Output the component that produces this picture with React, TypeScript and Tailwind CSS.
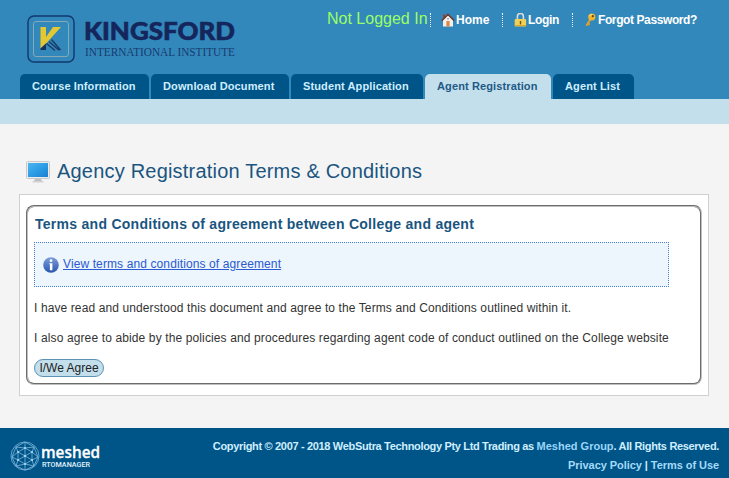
import React from 'react'

const tabs = [
  { label: 'Course Information', width: 'w-[129px]' },
  { label: 'Download Document', width: 'w-[138px]' },
  { label: 'Student Application', width: 'w-[132px]' },
  { label: 'Agent Registration', width: 'w-[126px]', active: true },
  { label: 'Agent List', width: 'w-[81px]' },
]

function KingsfordLogo() {
  return (
    <svg width="212" height="50" viewBox="0 0 212 50" className="block overflow-visible">
      <rect x="1" y="1" width="46" height="46" rx="6" fill="none" stroke="#12366e" strokeWidth="1.4" />
      <rect x="6.5" y="6.5" width="35" height="35" rx="2.5" fill="none" stroke="#86a9b5" strokeWidth="1" />
      <path d="M13.500 12h5.500v10l7-10h8L20 27.500l-6.500 6z" fill="#e3c832" />
      <path d="M13.500 35v-1.500l5.500-5v6.500z" fill="#16305f" />
      <path d="M19.500 28.500l8.500 7M22 26.500l10 8.800M24.500 24.500l9 10.500" stroke="#1b3a68" strokeWidth="1.500" fill="none" />
      <text x="57" y="25" textLength="151" lengthAdjust="spacingAndGlyphs" fontFamily="Lato, sans-serif" fontWeight="900" fontSize="25" fill="#14265c" stroke="#14265c" strokeWidth=".6">KINGSFORD</text>
      <text x="58" y="41" textLength="150" lengthAdjust="spacingAndGlyphs" fontFamily="Liberation Serif, serif" fontSize="12" fill="#173b70">INTERNATIONAL INSTITUTE</text>
    </svg>
  )
}

function HomeIcon() {
  return (
    <svg width="14" height="14" viewBox="0 0 14 14" className="shrink-0">
      <path d="M2 1.5h2v3H2z" fill="#a33c2c" />
      <path d="M2 7l5-5 5 5v6.5H2z" fill="#f3efed" />
      <path d="M.8 7.600L7 1.400l6.200 6.200" fill="none" stroke="#6d3a30" strokeWidth="1.500" />
      <path d="M5.400 8h3.200v5.500H5.400z" fill="#dd8743" />
      <path d="M6.200 5h1.600v1.600H6.200z" fill="#8aa5b8" />
    </svg>
  )
}

function LockIcon() {
  return (
    <svg width="13" height="14" viewBox="0 0 13 14" className="shrink-0">
      <path d="M3.400 7V3.400a3 3 0 0 1 6 0V7" fill="none" stroke="#d7dcdf" strokeWidth="1.600" />
      <rect x=".7" y="6" width="11.400" height="7.600" rx=".8" fill="#f2cf55" />
      <path d="M.7 12h11.400v1H.7z" fill="#d8a72e" />
      <path d="M5.800 8h1.400v3.400H5.800z" fill="#6c5314" />
    </svg>
  )
}

function KeyIcon() {
  return (
    <svg width="11" height="14" viewBox="0 0 11 14" className="shrink-0">
      <path d="M5.600 6L1.400 12.800M3 10.600l1.800 1" stroke="#dfa02c" strokeWidth="2" fill="none" />
      <circle cx="6.800" cy="4" r="3.600" fill="#f3b62b" />
      <path d="M4.300 3.200a2.800 2.800 0 0 1 3-1.600" stroke="#fbe08a" fill="none" />
      <circle cx="7.800" cy="3.200" r="1.100" fill="#5c4516" />
    </svg>
  )
}

function MonitorIcon() {
  return (
    <svg width="24" height="22" viewBox="0 0 24 22" className="block">
      <defs>
        <linearGradient id="screen" x1="0" y1="0" x2="1" y2="1">
          <stop offset="0" stopColor="#4fb4ef" />
          <stop offset=".5" stopColor="#2c9de6" />
          <stop offset="1" stopColor="#1c7fd0" />
        </linearGradient>
      </defs>
      <rect x=".5" y=".5" width="23" height="17" rx="1" fill="#ececec" stroke="#c6cacd" />
      <rect x="2" y="2" width="20" height="14" fill="url(#screen)" />
      <path d="M9 18h6l1 2H8z" fill="#bfbfbf" />
      <path d="M6.500 20h11v1.500h-11z" fill="#d2d2d2" />
    </svg>
  )
}

function InfoIcon() {
  return (
    <svg width="16" height="16" viewBox="0 0 16 16" className="block">
      <defs>
        <linearGradient id="info" x1="0" y1="0" x2="0" y2="1">
          <stop offset="0" stopColor="#7f9fdc" />
          <stop offset="1" stopColor="#2855ad" />
        </linearGradient>
      </defs>
      <circle cx="8" cy="8" r="7.800" fill="url(#info)" />
      <circle cx="8" cy="3.700" r="1.400" fill="#fff" />
      <path d="M6.400 6.200H9.400v7H6.900v-6h-.5z" fill="#fff" />
    </svg>
  )
}

function MeshedLogo() {
  return (
    <svg width="92" height="32" viewBox="0 0 92 32" className="block overflow-visible">
      <g fill="none" stroke="#7fb9df" strokeWidth=".8">
        <circle cx="14" cy="14" r="14" />
        <path d="M14 0L5 5 1 15l4 9 9 4 9-4 4-9-4-10z" />
        <path d="M14 6l-7 4v8l7 4 7-4v-8z" />
        <path d="M14 0v28M7 10l14 8M21 10L7 18M5 5l2 5-6 5 6 3-2 6M23 5l-2 5 6 5-6 3 2 6M5 5l9 1 9-1M5 24l9-2 9 2" />
      </g>
      <g fill="#b9e0f6">
        <circle cx="14" cy="14" r="1" />
        <circle cx="14" cy="6" r=".9" />
        <circle cx="7" cy="10" r=".9" />
        <circle cx="21" cy="10" r=".9" />
        <circle cx="7" cy="18" r=".9" />
        <circle cx="21" cy="18" r=".9" />
        <circle cx="14" cy="22" r=".9" />
      </g>
      <text x="30" y="16" textLength="59" lengthAdjust="spacingAndGlyphs" fontFamily="Open Sans, sans-serif" fontWeight="600" fontSize="16.500" fill="#fff" stroke="#fff" strokeWidth=".3">meshed</text>
      <text x="31" y="24.500" textLength="48" lengthAdjust="spacingAndGlyphs" fontFamily="Roboto, sans-serif" fontWeight="500" fontSize="8" fill="#e3f2fb">RTOMANAGER</text>
    </svg>
  )
}

export default function App() {
  return (
    <div className="flex h-[478px] w-[729px] flex-col overflow-hidden bg-[#f4f4f4] font-['Liberation_Sans',Arial,sans-serif] text-xs text-[#333]">
      {/* Header */}
      <header className="flex h-[99px] flex-col justify-between bg-[#3388bb]">
        <div className="flex justify-between">
          <div className="pt-[15px] pl-[27px]">
            <KingsfordLogo />
          </div>
          <div className="mt-[13px] mr-[32px] flex h-[14px] items-center font-bold text-white">
            <span className="mr-[2px] w-[101px] -translate-y-px whitespace-nowrap text-base font-normal text-[#99ff66]">Not Logged In</span>
            <a className="flex h-[14px] w-[72px] items-center gap-px border-l border-dotted border-white pl-[10px]">
              <HomeIcon />
              Home
            </a>
            <a className="flex h-[14px] w-[70px] items-center gap-px border-l border-dotted border-white pl-[11px] tracking-[-0.3px]">
              <LockIcon />
              Login
            </a>
            <a className="flex h-[14px] w-[125px] items-center gap-[2px] border-l border-dotted border-white pl-3 whitespace-nowrap tracking-[-0.4px]">
              <KeyIcon />
              Forgot Password?
            </a>
          </div>
        </div>
        <nav className="flex gap-[2px] pl-5">
          {tabs.map((tab) => (
            <a
              key={tab.label}
              className={`flex h-[25px] items-center rounded-t-[5px] pl-3 text-[11px] font-bold tracking-[0.12px] whitespace-nowrap ${tab.width} ${
                tab.active ? 'bg-[#c4dfec] text-[#1d5a86]' : 'bg-[#005588] text-[#cfeeff]'
              }`}
            >
              {tab.label}
            </a>
          ))}
        </nav>
      </header>
      <div className="h-[25px] bg-[#c4dfec]" />

      {/* Content */}
      <main className="flex-1 px-[19px] pt-[36px]">
        <div className="flex h-[34px] items-start gap-[7px] pl-[7px]">
          <div className="pt-px">
            <MonitorIcon />
          </div>
          <h1 className="text-xl leading-[22px] tracking-[0.2px] text-[#1a5580]">Agency Registration Terms &amp; Conditions</h1>
        </div>
        <section className="h-[202px] w-[690px] border border-[#d0d0d0] bg-white px-[6px] pt-[10px]">
          <div className="h-[180px] w-[676px] rounded-lg border-2 border-[#c0c0c0] px-[6px] pt-[9px] [border-style:groove]">
            <h2 className="pl-px text-sm leading-4 font-bold tracking-[0.275px] text-[#1a5580]">Terms and Conditions of agreement between College and agent</h2>
            <div className="mt-[10px] flex h-[45px] w-[635px] items-center gap-1 border border-dotted border-[#4a7fd0] bg-[#edf5fd] pl-2">
              <InfoIcon />
              <a className="pb-[2px] tracking-[0.11px] text-[#2a5bd0] underline">View terms and conditions of agreement</a>
            </div>
            <p className="mt-[13px] leading-4 tracking-[0.105px] whitespace-nowrap">I have read and understood this document and agree to the Terms and Conditions outlined within it.</p>
            <p className="mt-[14px] leading-4 tracking-[0.125px] whitespace-nowrap">I also agree to abide by the policies and procedures regarding agent code of conduct outlined on the College website</p>
            <button className="mt-[13px] flex h-[18px] w-[70px] items-center justify-center rounded-full border border-[#5c93b5] bg-[#c4dfec] text-[#222]">I/We Agree</button>
          </div>
        </section>
      </main>

      {/* Footer */}
      <footer className="flex h-[50px] justify-between bg-[#005588] pr-[10px] pl-[11px] text-[11px] font-bold text-[#cfeeff]">
        <div className="pt-[14px]">
          <MeshedLogo />
        </div>
        <div className="pt-[9px] text-right leading-[19px]">
          <p className="tracking-[-0.33px]">
            Copyright © 2007 - 2018 WebSutra Technology Pty Ltd Trading as <a className="tracking-normal text-[#99d5fa]">Meshed Group</a>. All Rights Reserved.
          </p>
          <p className="tracking-[-0.06px]">
            <a className="text-[#a5daf8]">Privacy Policy</a> | <a className="text-[#a5daf8]">Terms of Use</a>
          </p>
        </div>
      </footer>
    </div>
  )
}
